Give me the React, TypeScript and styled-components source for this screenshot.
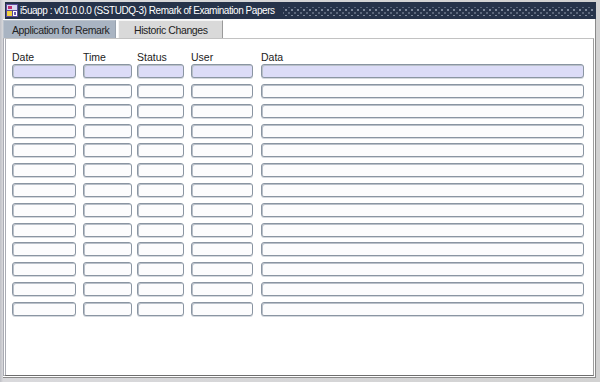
import styled, { createGlobalStyle } from 'styled-components';

const GlobalStyle = createGlobalStyle`
  html, body {
    margin: 0;
    padding: 0;
    background: #d2d2d2;
  }

  body {
    font-family: "Liberation Sans", Arial, sans-serif;
  }
`;

const columns = [
  { label: 'Date', span: 71, width: 64 },
  { label: 'Time', span: 54, width: 49 },
  { label: 'Status', span: 54, width: 47 },
  { label: 'User', span: 70, width: 62 },
  { label: 'Data', span: 323, width: 323 },
];

const ROW_COUNT = 13;

const Window = styled.div`
  box-sizing: border-box;
  display: flex;
  flex-direction: column;
  width: 600px;
  height: 382px;
  padding: 2px 4px 4px 3px;
  background: linear-gradient(90deg, #bfc0c6 0, #d9d9dc 3px, #d2d2d2 100%);
`;

const TitleBar = styled.div`
  display: flex;
  align-items: center;
  height: 17px;
  margin-left: 2px;
  padding: 0 3px 0 1px;
  background: #26334a;
  color: #ffffff;
  font-size: 10px;
  white-space: nowrap;
`;

const TitleIcon = styled.svg`
  flex: none;
  width: 12px;
  height: 13px;
  margin-right: 2px;
`;

const TitleText = styled.span`
  letter-spacing: -0.45px;
`;

const DotStrip = styled.div`
  flex: 1;
  height: 9px;
  margin-left: 8px;
  margin-top: 2px;
  background-image:
    radial-gradient(circle, #7c879a 0.8px, transparent 1.1px),
    radial-gradient(circle, #5a667b 0.8px, transparent 1.1px);
  background-size: 6px 6px, 6px 6px;
  background-position: 0 0, 3px 3px;
`;

const Body = styled.div`
  flex: 1;
  display: flex;
  flex-direction: column;
  background: #ffffff;
  border-right: 1px solid #8a8a8a;
  border-bottom: 1px solid #8a8a8a;
`;

const TabRow = styled.div`
  display: flex;
  gap: 2px;
  height: 19px;
  padding-top: 1px;
  box-sizing: border-box;
`;

const Tab = styled.div<{ $active?: boolean }>`
  display: flex;
  align-items: center;
  box-sizing: border-box;
  white-space: nowrap;
  font-size: 10.5px;
  letter-spacing: -0.4px;
  color: #222222;
  background: ${({ $active }) => ($active ? '#d9d9d9' : '#a9b4c2')};
  border-top: 1px solid ${({ $active }) => ($active ? '#f4f4f4' : '#bcc4ce')};
  border-left: 1px solid ${({ $active }) => ($active ? '#f4f4f4' : '#bcc4ce')};
  border-right: 1px solid ${({ $active }) => ($active ? '#9a9a9a' : '#98a2ae')};
  padding: ${({ $active }) => ($active ? '0 0 0 15px' : '0 0 0 8px')};
  width: ${({ $active }) => ($active ? '105px' : '113px')};
`;

const Panel = styled.div`
  flex: 1;
  margin: 0 1px 1px 0;
  padding: 12px 0 0 6px;
  border-top: 1px solid #c2c2c2;
  border-left: 3px double #a9abb3;
  border-right: 1px solid #9e9e9e;
  border-bottom: 1px solid #6e6e6e;
  background: #ffffff;
`;

const Grid = styled.div`
  display: grid;
  grid-template-columns: ${columns.map((c) => `${c.span}px`).join(' ')};
  row-gap: 5.83px;
`;

const Label = styled.div`
  font-size: 10.5px;
  line-height: 13px;
  color: #222222;
  margin-bottom: -5.8px;
`;

const Field = styled.div<{ $width: number; $current?: boolean }>`
  box-sizing: border-box;
  width: ${({ $width }) => $width}px;
  height: 14px;
  border: 1px solid #8a95a2;
  border-radius: 3px;
  background: ${({ $current }) => ($current ? '#dcdcf7' : '#fcfcfd')};
  box-shadow:
    inset 1px 1px 0 #b9c0c9,
    0 1px 0 #d4d8de;
`;

const AppIcon = () => (
  <TitleIcon viewBox="0 0 12 13">
    <rect x="0" y="0" width="12" height="13" fill="#5a4a9a" />
    <rect x="1" y="1" width="10" height="5" fill="#d8d8f0" />
    <rect x="2" y="2" width="4" height="3" fill="#c03070" />
    <rect x="1" y="7" width="5" height="5" fill="#f0d040" />
    <rect x="7" y="7" width="4" height="5" fill="#ffffff" />
    <rect x="8" y="8" width="2" height="3" fill="#6a5aaa" />
  </TitleIcon>
);

export default function App() {
  return (
    <>
      <GlobalStyle />
      <Window>
        <TitleBar>
          <AppIcon />
          <TitleText>i5uapp : v01.0.0.0 (SSTUDQ-3) Remark of Examination Papers</TitleText>
          <DotStrip />
        </TitleBar>
        <Body>
          <TabRow>
            <Tab>Application for Remark</Tab>
            <Tab $active>Historic Changes</Tab>
          </TabRow>
          <Panel>
            <Grid>
              {columns.map((c) => (
                <Label key={c.label}>{c.label}</Label>
              ))}
              {Array.from({ length: ROW_COUNT }).map((_, row) =>
                columns.map((c) => (
                  <Field
                    key={`${row}-${c.label}`}
                    $width={c.width}
                    $current={row === 0}
                  />
                ))
              )}
            </Grid>
          </Panel>
        </Body>
      </Window>
    </>
  );
}
